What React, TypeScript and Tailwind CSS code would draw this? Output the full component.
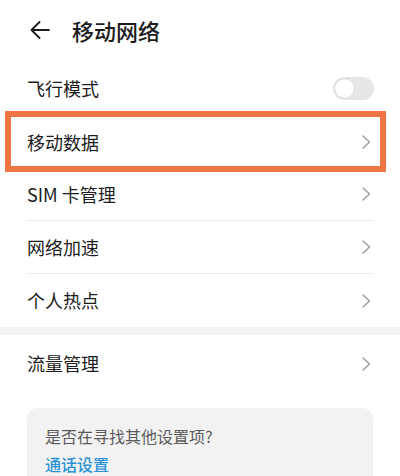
import React from "react";

function Chevron() {
  return (
    <svg width="9" height="14" viewBox="0 0 9 14" fill="none" className="shrink-0">
      <path d="M1 1l6.5 6L1 13" stroke="#9a9a9a" strokeWidth="1.4" strokeLinecap="round" strokeLinejoin="round" />
    </svg>
  );
}

function Row({ label, className = "h-[52px]" }: { label: string; className?: string }) {
  return (
    <div className={`flex items-center justify-between pr-[29px] ${className}`}>
      <span className="text-[18px] text-[#1c1c1c]">{label}</span>
      <Chevron />
    </div>
  );
}

function Divider() {
  return <div className="mr-[27px] h-px bg-[#ebebeb]" />;
}

export default function App() {
  return (
    <div
      className="h-[476px] w-[400px] overflow-hidden bg-white"
      style={{ fontFamily: '"Noto Sans CJK SC", "Noto Sans", sans-serif' }}
    >
      {/* header */}
      <div className="flex h-[60px] items-center pl-[30px]">
        <svg width="20" height="18" viewBox="0 0 20 18" fill="none">
          <path d="M1.5 9H19M9.5 1L1.5 9l8 8" stroke="#1c1c1c" strokeWidth="1.8" strokeLinecap="round" strokeLinejoin="round" />
        </svg>
        <h1 className="ml-[22px] text-[22px] font-medium text-[#1c1c1c]">移动网络</h1>
      </div>

      <div className="pl-[27px]">
        <div className="flex h-[56px] items-center justify-between pr-[26px]">
          <span className="text-[18px] text-[#1c1c1c]">飞行模式</span>
          <div className="flex h-[23px] w-[41px] items-center rounded-full bg-[#e6e6e6] px-[2px]">
            <div className="h-[19px] w-[19px] rounded-full bg-white shadow-[0_0_1px_rgba(0,0,0,0.25)]" />
          </div>
        </div>

        <div className="relative">
          <Row label="移动数据" />
          <div className="pointer-events-none absolute -top-[5px] -bottom-[4px] -left-[22px] right-[14px] border-[6px] border-[#f07545]" />
        </div>

        <Row label="SIM 卡管理" />
        <Divider />
        <Row label="网络加速" />
        <Divider />
        <Row label="个人热点" className="h-[53px]" />
      </div>

      <div className="h-[8px] bg-[#f4f4f4]" />

      <div className="pl-[27px]">
        <Row label="流量管理" className="h-[57px]" />
      </div>

      <div className="mx-[27px] mt-[16px] rounded-[10px] bg-[#f2f2f2] px-[18px] pt-[16px] pb-4">
        <p className="text-[16px] leading-[24px] text-[#5a5a5a]">是否在寻找其他设置项?</p>
        <p className="mt-[4px] text-[16px] font-medium leading-[24px] text-[#2a93d8]">通话设置</p>
      </div>
    </div>
  );
}
